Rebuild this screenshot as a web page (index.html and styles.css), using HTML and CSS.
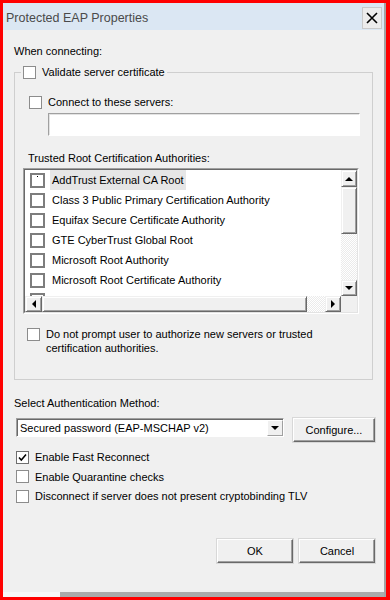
FILE: index.html
```html
<!DOCTYPE html>
<html lang="en">
<head>
    <meta charset="UTF-8">
    <meta name="viewport" content="width=device-width, initial-scale=1.0">
    <title>Protected EAP Properties</title>
    <link rel="stylesheet" href="styles.css">
</head>
<body>
    <div class="screen">
        <div class="window">
            <!-- Title bar -->
            <div class="titlebar">
                <span class="title">Protected EAP Properties</span>
                <span class="close">
                    <svg width="14" height="14" viewBox="0 0 14 14"><path d="M2 2 L12 12 M12 2 L2 12" stroke="#000" stroke-width="1.6" fill="none"/></svg>
                </span>
            </div>

            <!-- Dialog body -->
            <div class="dialog">
                <div class="label when">When connecting:</div>

                <fieldset class="group">
                    <legend class="check-row"><span class="box"></span>Validate server certificate</legend>

                    <div class="check-row connect"><span class="box"></span>Connect to these servers:</div>
                    <div class="servers"></div>

                    <div class="label trusted">Trusted Root Certification Authorities:</div>
                    <div class="listbox">
                        <div class="listbox-inner">
                            <div class="items">
                                <div class="item"><span class="lbox focus"></span><span class="item-text selected">AddTrust External CA Root</span></div>
                                <div class="item"><span class="lbox"></span><span class="item-text">Class 3 Public Primary Certification Authority</span></div>
                                <div class="item"><span class="lbox"></span><span class="item-text">Equifax Secure Certificate Authority</span></div>
                                <div class="item"><span class="lbox"></span><span class="item-text">GTE CyberTrust Global Root</span></div>
                                <div class="item"><span class="lbox"></span><span class="item-text">Microsoft Root Authority</span></div>
                                <div class="item"><span class="lbox"></span><span class="item-text">Microsoft Root Certificate Authority</span></div>
                                <div class="item"><span class="lbox"></span><span class="item-text">Symantec Root 2005 CA</span></div>
                            </div>
                            <div class="vscroll">
                                <span class="sbtn"><i class="arrow up"></i></span>
                                <span class="thumb v"></span>
                                <span class="track"></span>
                                <span class="sbtn"><i class="arrow down"></i></span>
                            </div>
                            <div class="hscroll">
                                <span class="sbtn"><i class="arrow left"></i></span>
                                <span class="thumb h"></span>
                                <span class="track"></span>
                                <span class="sbtn"><i class="arrow right"></i></span>
                            </div>
                            <div class="corner"></div>
                        </div>
                    </div>

                    <div class="check-row prompt"><span class="box"></span><span>Do not prompt user to authorize new servers or trusted certification authorities.</span></div>
                </fieldset>

                <div class="label method">Select Authentication Method:</div>
                <div class="method-row">
                    <div class="select">
                        <span class="select-text">Secured password (EAP-MSCHAP v2)</span>
                        <span class="drop"><i class="arrow down"></i></span>
                    </div>
                    <button class="btn configure">Configure...</button>
                </div>

                <div class="options">
                    <div class="check-row"><span class="box checked"><svg width="11" height="11" viewBox="0 0 11 11"><path d="M2 5.5 L4.3 8 L9 2.5" stroke="#000" stroke-width="1.5" fill="none"/></svg></span>Enable Fast Reconnect</div>
                    <div class="check-row"><span class="box"></span>Enable Quarantine checks</div>
                    <div class="check-row"><span class="box"></span>Disconnect if server does not present cryptobinding TLV</div>
                </div>

                <div class="actions">
                    <button class="btn">OK</button>
                    <button class="btn">Cancel</button>
                </div>
            </div>

            <div class="bottom-edge"><span class="edge-light"></span></div>
        </div>
    </div>
</body>
</html>
```

FILE: styles.css
```css
/* General */
body {
    margin: 0;
    font-family: "Liberation Sans", Arial, sans-serif;
    font-size: 11px;
    line-height: 14px;
    color: #000;
}

.screen {
    width: 390px;
    height: 600px;
    box-sizing: border-box;
    border: 3px solid #f00;
    border-right-width: 4px;
    background: #f00;
}

.window {
    height: 100%;
    display: flex;
    flex-direction: column;
    background: #f0f0f0;
    border-right: 2px solid #a3a3a3;
}

/* Title bar */
.titlebar {
    height: 27px;
    flex-shrink: 0;
    display: flex;
    align-items: center;
    justify-content: space-between;
    padding: 0 2px 0 3px;
    background: #dbe7f3;
}

.title {
    font-size: 12.5px;
    color: #4a4a4a;
    margin-top: 2px;
}

.close {
    width: 18px;
    height: 20px;
    display: flex;
    align-items: center;
    justify-content: center;
    background: #ececec;
    border: 1px solid #c9c9c9;
    margin-top: 2px;
}

/* Dialog body */
.dialog {
    flex: 1;
    padding: 14px 11px 0 11px;
    display: flex;
    flex-direction: column;
}

.label {
    height: 14px;
}

.check-row {
    display: flex;
    align-items: center;
    gap: 6px;
    height: 14px;
}

.box {
    width: 13px;
    height: 13px;
    box-sizing: border-box;
    border: 1px solid #8c8c8c;
    background: #fff;
    flex-shrink: 0;
    display: flex;
    align-items: center;
    justify-content: center;
}

.box.checked {
    border-color: #6f6f6f;
}

/* Group box */
.group {
    margin: 7px 0 0 0;
    padding: 16px 0 24px 8px;
    border: 1px solid #cfcfcf;
    min-width: 0;
}

.group legend {
    padding: 0 2px;
    margin-left: -2px;
}

.connect {
    margin-left: 6px;
}

.servers {
    margin: 4px 0 0 25px;
    width: 312px;
    height: 23px;
    box-sizing: border-box;
    background: #fff;
    border: 1px solid;
    border-color: #a0a0a0 #fff #fff #a0a0a0;
    box-shadow: inset 1px 1px 0 #e3e3e3;
}

.trusted {
    margin: 15px 0 0 5px;
}

/* List box */
.listbox {
    margin-top: 3px;
    width: 336px;
    height: 146px;
    box-sizing: border-box;
    border: 1px solid;
    border-color: #a0a0a0 #fff #fff #a0a0a0;
}

.listbox-inner {
    height: 100%;
    box-sizing: border-box;
    border: 1px solid;
    border-color: #696969 #e3e3e3 #e3e3e3 #696969;
    display: grid;
    grid-template-columns: 1fr 16px;
    grid-template-rows: 1fr 16px;
}

.items {
    background: #fff;
    overflow: hidden;
    padding-left: 5px;
}

.item {
    height: 20px;
    display: flex;
    align-items: center;
}

.lbox {
    width: 15px;
    height: 15px;
    box-sizing: border-box;
    border: 2px solid #7d7d7d;
    position: relative;
    flex-shrink: 0;
}

.lbox.focus::after {
    content: "";
    position: absolute;
    top: 1px;
    left: 5px;
    width: 1px;
    height: 1px;
    background: #000;
}

.item-text {
    margin-left: 5px;
    padding: 0 2px;
    line-height: 20px;
    white-space: nowrap;
}

.item-text.selected {
    background: #e6e6e6;
}

/* Scrollbars */
.vscroll {
    display: grid;
    grid-template-rows: 17px 47px 1fr 16px;
}

.hscroll {
    display: grid;
    grid-template-columns: 17px 265px 1fr 16px;
}

.sbtn,
.thumb {
    box-sizing: border-box;
    background: #f0f0f0;
    border: 1px solid;
    border-color: #f0f0f0 #696969 #696969 #f0f0f0;
    box-shadow: inset 1px 1px 0 #fff, inset -1px -1px 0 #a0a0a0;
    display: flex;
    align-items: center;
    justify-content: center;
}

.track {
    background: repeating-conic-gradient(#fff 0 25%, #ebebeb 0 50%) 0 0 / 2px 2px;
}

.corner {
    background: #f0f0f0;
}

.arrow {
    width: 0;
    height: 0;
    border: 4px solid transparent;
}

.arrow.up {
    border-bottom-color: #000;
    border-top-width: 0;
}

.arrow.down {
    border-top-color: #000;
    border-bottom-width: 0;
}

.arrow.left {
    border-right-color: #000;
    border-left-width: 0;
}

.arrow.right {
    border-left-color: #000;
    border-right-width: 0;
}

.prompt {
    margin: 13px 0 0 4px;
    height: auto;
    align-items: flex-start;
}

.prompt .box {
    margin-top: 1px;
}

.prompt span:last-child {
    width: 300px;
}

/* Authentication method */
.method {
    margin-top: 16px;
}

.method-row {
    margin-top: 8px;
    display: flex;
    align-items: flex-start;
    gap: 9px;
    margin-left: 2px;
    margin-right: -2px;
}

.select {
    width: 268px;
    height: 19px;
    box-sizing: border-box;
    background: #fff;
    border: 1px solid;
    border-color: #a0a0a0 #fff #fff #a0a0a0;
    box-shadow: inset 1px 1px 0 #696969;
    display: flex;
    align-items: center;
    justify-content: space-between;
    padding: 1px 0 0 3px;
}

.drop {
    width: 16px;
    height: 16px;
    box-sizing: border-box;
    background: #f0f0f0;
    border: 1px solid;
    border-color: #fff #a0a0a0 #a0a0a0 #fff;
    display: flex;
    align-items: center;
    justify-content: center;
}

.btn {
    font: inherit;
    color: #000;
    width: 76px;
    height: 24px;
    padding: 0;
    background: #f0f0f0;
    border: 1px solid;
    border-color: #fff #696969 #696969 #fff;
    box-shadow: inset -1px -1px 0 #a0a0a0, 0 0 0 1px #d8d8d8;
}

.btn.configure {
    width: 82px;
}

/* Options */
.options {
    margin: 8px 0 0 2px;
    display: flex;
    flex-direction: column;
    gap: 5.5px;
}

.actions {
    margin-top: 36px;
    margin-right: -2px;
    display: flex;
    justify-content: flex-end;
    gap: 6px;
}

/* Window bottom edge */
.bottom-edge {
    height: 5px;
    flex-shrink: 0;
    background: #ababab;
    display: flex;
}

.edge-light {
    width: 57px;
    background: #f7f7f7;
}
```
